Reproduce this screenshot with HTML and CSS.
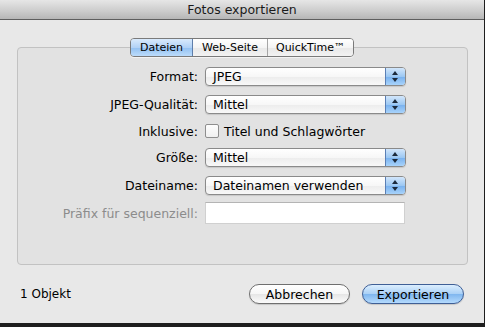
FILE: index.html
```html
<!DOCTYPE html>
<html lang="de">
<head>
    <meta charset="UTF-8">
    <title>Fotos exportieren</title>
    <link rel="stylesheet" href="styles.css">
</head>
<body>

    <div class="sheet">
        <div class="titlebar">Fotos exportieren</div>

        <div class="content">
            <div class="tabs">
                <span class="tab active">Dateien</span>
                <span class="tab">Web-Seite</span>
                <span class="tab">QuickTime™</span>
            </div>

            <div class="group">
                <div class="form-grid">
                    <span class="label">Format:</span>
                    <div class="popup"><span>JPEG</span><i class="arrows"></i></div>

                    <span class="label">JPEG-Qualität:</span>
                    <div class="popup"><span>Mittel</span><i class="arrows"></i></div>

                    <span class="label">Inklusive:</span>
                    <label class="check"><span class="box"></span>Titel und Schlagwörter</label>

                    <span class="label">Größe:</span>
                    <div class="popup"><span>Mittel</span><i class="arrows"></i></div>

                    <span class="label">Dateiname:</span>
                    <div class="popup"><span>Dateinamen verwenden</span><i class="arrows"></i></div>

                    <span class="label disabled">Präfix für sequenziell:</span>
                    <div class="textfield"></div>
                </div>
            </div>

            <div class="footer">
                <span class="count">1 Objekt</span>
                <div class="buttons">
                    <button type="button" class="btn">Abbrechen</button>
                    <button type="button" class="btn default">Exportieren</button>
                </div>
            </div>
        </div>
    </div>

</body>
</html>
```

FILE: styles.css
```css
/* Global */
* {
    margin: 0;
    padding: 0;
    box-sizing: border-box;
}

body {
    font-family: 'DejaVu Sans', 'Liberation Sans', sans-serif;
    font-size: 12.5px;
    color: #000;
    background: #1e1e1e;
    width: 485px;
    height: 327px;
    overflow: hidden;
}

/* Sheet window */
.sheet {
    width: 484px;
    height: 323px;
    background: #e8e8e8;
    display: flex;
    flex-direction: column;
}

.titlebar {
    height: 20px;
    line-height: 19px;
    text-align: center;
    font-size: 12.5px;
    color: #1a1a1a;
    background: linear-gradient(#e6e6e6, #cbcbcb 60%, #b6b6b6);
    border-bottom: 1px solid #5e5e5e;
}

.content {
    flex: 1;
    display: flex;
    flex-direction: column;
    padding: 18px 17px 0 17px;
}

/* Segmented tabs */
.tabs {
    align-self: flex-start;
    margin-left: 113px;
    margin-bottom: -10px;
    position: relative;
    z-index: 1;
    display: flex;
    height: 19px;
    border: 1px solid #7a7a7a;
    border-radius: 4px;
    overflow: hidden;
    font-size: 11px;
    box-shadow: 0 1px 0 rgba(255, 255, 255, 0.6);
}

.tab {
    display: flex;
    align-items: center;
    justify-content: center;
    background: linear-gradient(#ffffff, #f4f4f4 50%, #e8e8e8 51%, #f2f2f2);
    border-left: 1px solid #a6a6a6;
}

.tab:nth-child(1) { width: 62px; border-left: none; }
.tab:nth-child(2) { width: 74px; }
.tab:nth-child(3) { width: 86px; }

.tab.active {
    background: linear-gradient(#d9eafc, #b2d2f6 50%, #92c0f1 51%, #bcdcfb);
    border-right: 1px solid #5f7fab;
}

.tab.active + .tab {
    border-left: none;
}

/* Group box */
.group {
    height: 218px;
    width: 451px;
    background: #e2e2e2;
    border: 1px solid #c2c2c2;
    border-radius: 4px;
    padding: 19px 0 0 0;
}

.form-grid {
    display: grid;
    grid-template-columns: 180px 201px;
    grid-template-rows: 19px 19px 16px 19px 19px 19px;
    column-gap: 7px;
    row-gap: 9px;
    align-items: center;
}

.label {
    text-align: right;
    white-space: nowrap;
}

.label.disabled {
    color: #8c8c8c;
}

/* Popup buttons */
.popup {
    height: 19px;
    display: flex;
    align-items: center;
    border: 1px solid #8a8a8a;
    border-radius: 4px;
    background: linear-gradient(#ffffff, #f7f7f7 50%, #ececec 51%, #f8f8f8);
    box-shadow: 0 1px 1px rgba(0, 0, 0, 0.12);
    overflow: hidden;
}

.popup span {
    flex: 1;
    padding-left: 7px;
    white-space: nowrap;
}

.arrows {
    width: 20px;
    height: 100%;
    border-left: 1px solid #5a7fb5;
    background: linear-gradient(#d2e6fb, #9cc8f3 50%, #77b0ee 51%, #a8d3fb);
    position: relative;
}

.arrows::before,
.arrows::after {
    content: "";
    position: absolute;
    left: 6px;
    border-left: 3.5px solid transparent;
    border-right: 3.5px solid transparent;
}

.arrows::before {
    top: 3px;
    border-bottom: 4px solid #1c2a3c;
}

.arrows::after {
    bottom: 3px;
    border-top: 4px solid #1c2a3c;
}

/* Checkbox */
.check {
    display: flex;
    align-items: center;
    gap: 5px;
    white-space: nowrap;
}

.box {
    width: 14px;
    height: 14px;
    border: 1px solid #8e8e8e;
    border-radius: 2px;
    background: linear-gradient(#fdfdfd, #f0f0f0);
}

/* Text field */
.textfield {
    align-self: start;
    height: 22px;
    margin-top: -2px;
    width: 200px;
    background: #fff;
    border: 1px solid #d0d0d0;
    border-top-color: #b4b4b4;
}

/* Footer */
.footer {
    flex: 1;
    display: flex;
    align-items: center;
    justify-content: space-between;
    padding: 0 3px 0 3px;
}

.count {
    font-size: 12px;
}

.buttons {
    display: flex;
    gap: 12px;
}

.btn {
    font-family: inherit;
    font-size: 12.5px;
    height: 20px;
    width: 101px;
    border-radius: 10px;
    border: 1px solid #6f6f6f;
    background: linear-gradient(#ffffff, #f6f6f6 50%, #e6e6e6 51%, #fbfbfb);
    box-shadow: 0 1px 1px rgba(0, 0, 0, 0.15);
    color: #000;
}

.btn.default {
    width: 102px;
    border-color: #3f5f96;
    background: linear-gradient(#dceefe, #a9d0f6 50%, #7fb6ef 51%, #b4dafd);
}
```
